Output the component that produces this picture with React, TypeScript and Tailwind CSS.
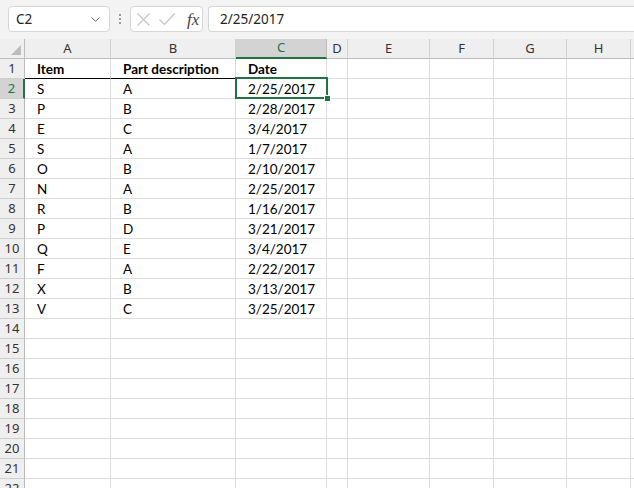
import { ChevronDown } from 'lucide-react'

const cols = ['A', 'B', 'C', 'D', 'E', 'F', 'G', 'H', '']

const data: string[][] = [
  ['Item', 'Part description', 'Date'],
  ['S', 'A', '2/25/2017'],
  ['P', 'B', '2/28/2017'],
  ['E', 'C', '3/4/2017'],
  ['S', 'A', '1/7/2017'],
  ['O', 'B', '2/10/2017'],
  ['N', 'A', '2/25/2017'],
  ['R', 'B', '1/16/2017'],
  ['P', 'D', '3/21/2017'],
  ['Q', 'E', '3/4/2017'],
  ['F', 'A', '2/22/2017'],
  ['X', 'B', '3/13/2017'],
  ['V', 'C', '3/25/2017'],
]

const rowCount = 22

export default function App() {
  return (
    <div className="w-[634px] h-[488px] overflow-hidden bg-white font-['Noto_Sans',sans-serif]">
      {/* formula bar */}
      <div className="h-[39px] bg-[#f3f3f3] flex items-start pt-[6px] pl-[8px]">
        <div className="w-[102px] h-[26px] bg-white border border-[#d6d6d6] rounded-[4px] flex items-center justify-between pl-[7px] pr-[6px] text-[13.5px] text-[#222]">
          <span>C2</span>
          <ChevronDown size={15} strokeWidth={1.5} className="text-[#555]" />
        </div>
        <div className="w-[20px] h-[26px] flex flex-col items-center justify-center gap-[2px]">
          <span className="w-[2px] h-[2px] bg-[#9a9a9a]" />
          <span className="w-[2px] h-[2px] bg-[#9a9a9a]" />
          <span className="w-[2px] h-[2px] bg-[#9a9a9a]" />
        </div>
        <div className="w-[73px] h-[26px] bg-white border border-[#d6d6d6] rounded-[4px] flex items-center relative">
          <svg width="50" height="24" className="shrink-0">
            <path d="M6.5 6.5 L18.5 18.5 M18.5 6.5 L6.5 18.5" stroke="#c4c4c4" strokeWidth="1.2" fill="none" />
            <path d="M28.5 12.5 L33.5 17.5 L43.5 6.5" stroke="#c4c4c4" strokeWidth="1.2" fill="none" />
          </svg>
          <span className="ml-[6px] font-['Liberation_Serif',serif] italic text-[17px] text-[#444] leading-none">fx</span>
        </div>
        <div className="flex-1 ml-[5px] h-[26px] bg-white border border-[#d6d6d6] border-r-0 rounded-l-[4px] flex items-center pl-[11px] text-[13.5px] text-[#222]">
          2/25/2017
        </div>
      </div>

      {/* grid */}
      <div className="grid grid-cols-[25px_86px_125px_91px_21px_82px_64px_73px_64px_1fr] font-['Lato',sans-serif]">
        {/* header row */}
        <div className="h-[20px] bg-[#efefef] border-r border-b border-[#bcbcbc] relative">
          <svg width="25" height="20" className="absolute inset-0">
            <polygon points="11,16 21,16 21,6" fill="#bcbcbc" />
          </svg>
        </div>
        {cols.map((c, i) =>
          c === 'C' ? (
            <div
              key={i}
              className="h-[20px] bg-[#d3d3d3] border-r border-[#bcbcbc] border-b-2 border-b-[#217346] flex items-center justify-center text-[13px] text-[#217346] font-['Noto_Sans',sans-serif]"
            >
              {c}
            </div>
          ) : (
            <div
              key={i}
              className="h-[20px] bg-[#efefef] border-r border-b border-[#d0d0d0] border-b-[#bcbcbc] flex items-center justify-center text-[13px] text-[#333] font-['Noto_Sans',sans-serif]"
            >
              {c}
            </div>
          )
        )}

        {Array.from({ length: rowCount }).map((_, r) => {
          const row = data[r] || []
          const rowNum = r + 1
          return [
            <div
              key={`h${r}`}
              className={
                rowNum === 2
                  ? 'h-[20px] bg-[#d3d3d3] border-b border-[#d0d0d0] border-r-2 border-r-[#217346] flex items-center justify-center text-[13px] text-[#217346] font-[\'Noto_Sans\',sans-serif]'
                  : 'h-[20px] bg-[#efefef] border-b border-[#d0d0d0] border-r border-r-[#bcbcbc] flex items-center justify-center text-[13px] text-[#333] font-[\'Noto_Sans\',sans-serif]'
              }
            >
              {rowNum}
            </div>,
            ...cols.map((_, ci) => {
              const text = row[ci] || ''
              const black = rowNum === 1 && ci < 3
              const selected = rowNum === 2 && ci === 2
              return (
                <div
                  key={`c${r}-${ci}`}
                  className={`h-[20px] ${selected ? 'relative' : ''} border-r border-[#dcdcdc] border-b ${
                    black ? 'border-b-black' : 'border-b-[#dcdcdc]'
                  } flex items-end pl-[12px] text-[13.5px] leading-[18px] text-black whitespace-nowrap ${
                    rowNum === 1 ? 'font-bold' : ''
                  }`}
                >
                  {text}
                  {selected && (
                    <>
                      <div className="absolute z-10 left-[-1px] top-[-2px] w-[93px] h-[22px] border-2 border-[#217346]" />
                      <div className="absolute z-20 left-[88px] top-[16px] w-[7px] h-[7px] bg-[#217346] border border-white" />
                    </>
                  )}
                </div>
              )
            }),
          ]
        })}
      </div>
    </div>
  )
}
